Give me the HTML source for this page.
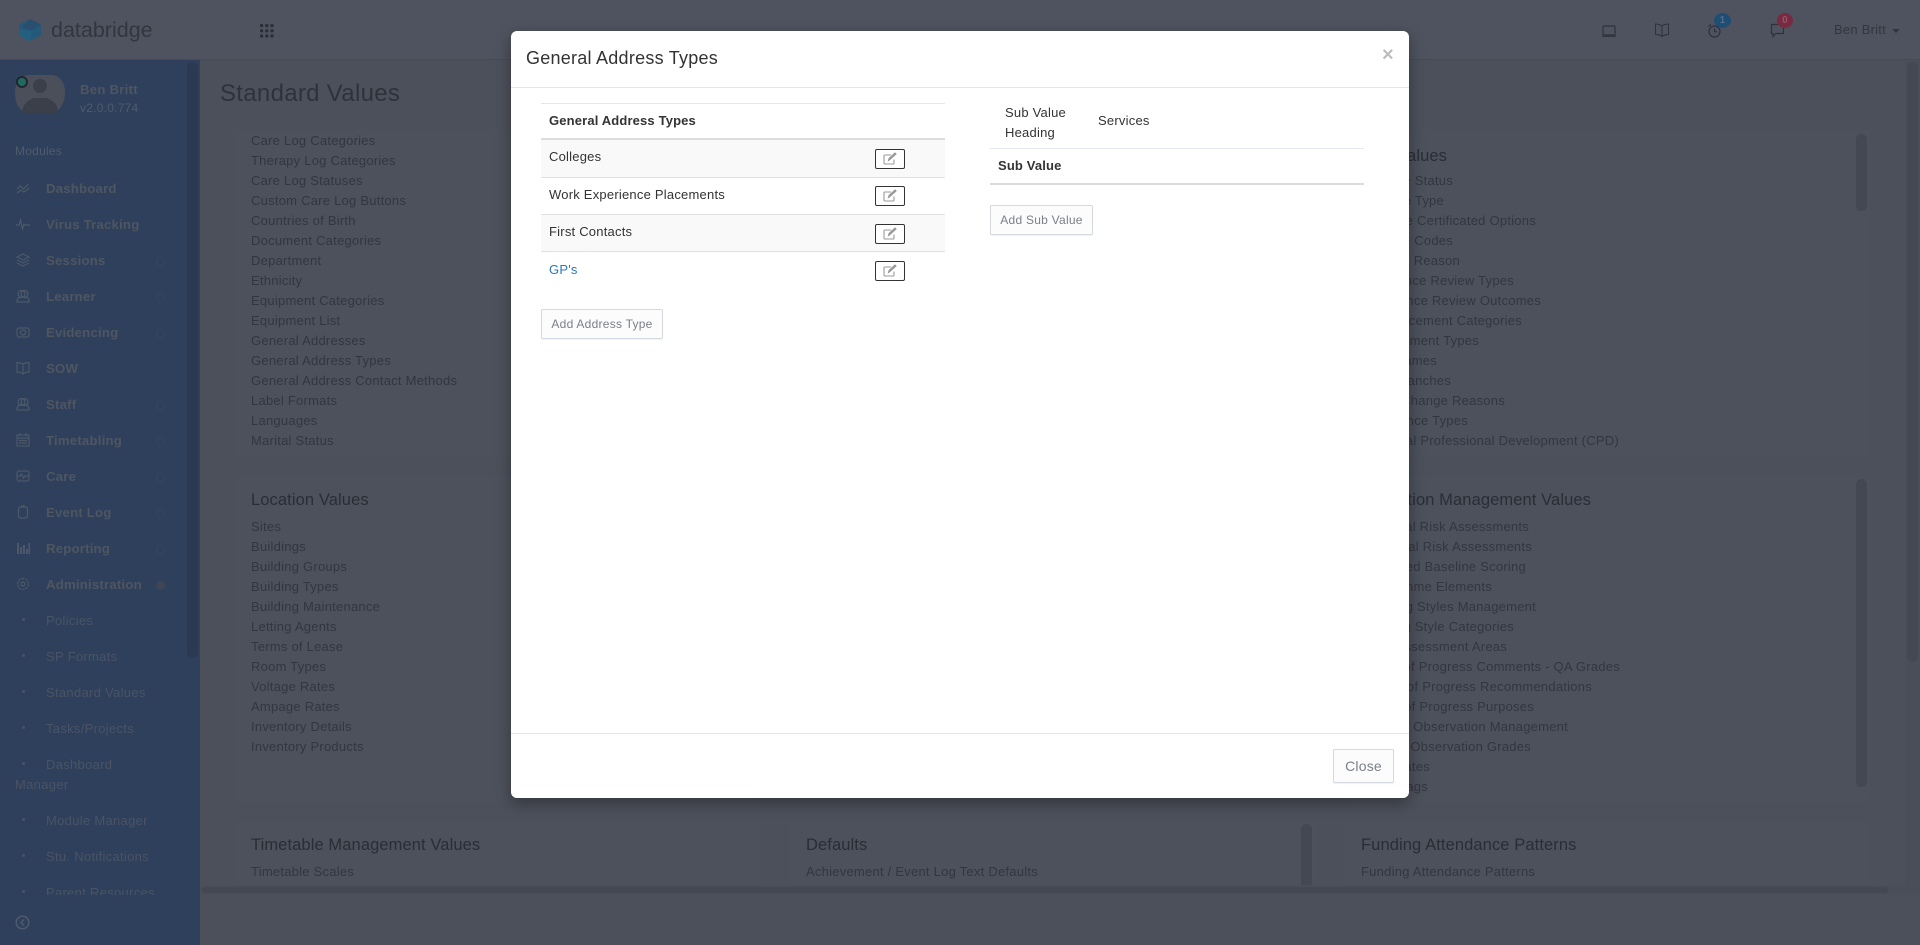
<!DOCTYPE html>
<html lang="en"><head><meta charset="utf-8"><title>Standard Values</title>
<style>
*{box-sizing:border-box}
html,body{margin:0;padding:0;width:1920px;height:945px;overflow:hidden;background:#4c505b;font-family:"Liberation Sans",sans-serif;font-size:13px;letter-spacing:.24px}
.a{position:absolute;white-space:nowrap}
.t{position:absolute;white-space:nowrap;line-height:20px;color:#33363f;margin-top:1px}
.h{position:absolute;white-space:nowrap;line-height:24px;font-size:16.5px;letter-spacing:.1px;color:#2a2d35;margin-top:1px}
.card{position:absolute;background:#4d515c}
.m{position:absolute;left:46px;line-height:20px;font-weight:bold;color:#4f5561;white-space:nowrap;font-size:13.2px;letter-spacing:.2px;margin-top:1px}
.s{position:absolute;left:46px;line-height:20px;color:#4b5364;white-space:nowrap;font-size:13px;letter-spacing:.3px;margin-top:1px}
.d{position:absolute;left:22px;width:3px;height:3px;border-radius:50%;background:#4b5364}
.c{position:absolute;left:156px;width:9px;height:9px;border-radius:50%;border:1px solid #36465f;margin-top:1px}
.i{position:absolute;left:16px;width:14px;height:14px;fill:none;stroke:#4e5868;stroke-width:1.2}
.sb{position:absolute;background:#444852;border-radius:6px}
.txt{position:absolute;white-space:nowrap;color:#333;line-height:20px;font-size:13px;margin-top:1px;letter-spacing:.22px}
.ed{position:absolute;left:875px;width:30px;height:20px;border:1px solid #333;border-radius:2px;background:#fff}
.ed svg{position:absolute;left:7px;top:2px;width:14px;height:13px;fill:none;stroke:#999;stroke-width:1.1}
.btn{position:absolute;border:1px solid #d4d8df;border-radius:2px;background:#fcfcfd;color:#7a8088;text-align:center;white-space:nowrap;box-shadow:0 1px 1px rgba(0,0,0,.06);font-size:12px;letter-spacing:.25px}
</style></head><body>

<!-- top bar -->
<div class="a" style="left:0;top:0;width:1920px;height:60px;background:#4f535f;border-bottom:1px solid #474b56"></div>
<svg class="a" style="left:18px;top:18px;width:24px;height:24px" viewBox="0 0 24 26" preserveAspectRatio="none"><polygon points="12,1 23,7 23,19 12,25 1,19 1,7" fill="#25597a"/><polygon points="12,1 23,7 14,13 3,11" fill="#2a4f6e"/><polygon points="1,12 14,14 12,25 1,19" fill="#235f7f"/></svg>
<div class="a" style="left:51px;top:14px;line-height:32px;font-size:21.5px;letter-spacing:0;color:#33363f">databridge</div>
<svg class="a" style="left:260px;top:24px;width:14px;height:14px" viewBox="0 0 14 14" fill="#2b2e36"><rect x="0" y="0" width="3.2" height="3.2" rx="1"/><rect x="5.2" y="0" width="3.2" height="3.2" rx="1"/><rect x="10.4" y="0" width="3.2" height="3.2" rx="1"/><rect x="0" y="5.2" width="3.2" height="3.2" rx="1"/><rect x="5.2" y="5.2" width="3.2" height="3.2" rx="1"/><rect x="10.4" y="5.2" width="3.2" height="3.2" rx="1"/><rect x="0" y="10.4" width="3.2" height="3.2" rx="1"/><rect x="5.2" y="10.4" width="3.2" height="3.2" rx="1"/><rect x="10.4" y="10.4" width="3.2" height="3.2" rx="1"/></svg>
<svg class="a" style="left:1601px;top:24px;width:16px;height:14px;fill:none;stroke:#2f323a;stroke-width:1.2" viewBox="0 0 16 14"><rect x="2" y="2" width="12" height="9" rx="1"/><path d="M1 12.2h14"/></svg>
<svg class="a" style="left:1654px;top:23px;width:16px;height:15px;fill:none;stroke:#2f323a;stroke-width:1" viewBox="0 0 16 15"><path d="M8 3C6 1.500 4 1 1.500 1v10.500c2.500 0 4.500.5 6.500 2 2-1.500 4-2 6.500-2V1C12 1 10 1.500 8 3zM8 3v10.500"/></svg>
<svg class="a" style="left:1707px;top:23px;width:15px;height:15px;fill:none;stroke:#2f323a;stroke-width:1.2" viewBox="0 0 15 15"><circle cx="7.500" cy="8.500" r="5.500"/><path d="M7.500 5.500v3.200h2.500M1.500 3.500L4 1.500"/></svg>
<svg class="a" style="left:1770px;top:23px;width:15px;height:15px;fill:none;stroke:#2f323a;stroke-width:1.2" viewBox="0 0 15 15"><path d="M1.500 1.500h12v9H6l-3 3v-3H1.500z"/></svg>
<div class="a" style="left:1714px;top:13px;width:17px;height:15px;border-radius:50%;background:#1f4e74;color:#4f6c88;font-size:10px;line-height:15px;text-align:center;font-weight:bold">1</div>
<div class="a" style="left:1777px;top:13px;width:16px;height:15px;border-radius:50%;background:#7a2a40;color:#8f5666;font-size:10px;line-height:15px;text-align:center;font-weight:bold">0</div>
<div class="t" style="left:1834px;top:19px">Ben Britt</div>
<div class="a" style="left:1892px;top:29px;width:0;height:0;border-left:4px solid transparent;border-right:4px solid transparent;border-top:4px solid #33363f"></div>

<!-- sidebar -->
<div class="a" style="left:0;top:60px;width:200px;height:885px;background:#2e405b"></div>
<div class="a" style="left:187px;top:62px;width:11px;height:596px;background:#2b3a52;border-radius:6px"></div>
<svg class="a" style="left:15px;top:75px;width:50px;height:38px" viewBox="0 0 50 38"><path d="M14 0h22c8 0 14 7 14 17 0 12-6 21-15 21H14C6 38 0 30 0 18 0 7 6 0 14 0z" fill="#4a4f5a"/><circle cx="25" cy="11" r="7" fill="#3b3f49"/><path d="M7 38c1-11 8-13 12-15h12c5 2 12 4 12 15z" fill="#3b3f49"/></svg>
<div class="a" style="left:16px;top:76px;width:12px;height:12px;border-radius:50%;background:#1f6b63;border:2px solid #22272f"></div>
<div class="a" style="left:80px;top:80px;line-height:20px;font-weight:bold;color:#4f5561;font-size:13.2px">Ben Britt</div>
<div class="a" style="left:80px;top:98px;line-height:20px;color:#505a6b;font-size:12px">v2.0.0.774</div>
<div class="a" style="left:15px;top:141px;line-height:20px;color:#505a6b;font-size:12px">Modules</div>

<svg class="i" style="top:181px" viewBox="0 0 14 14"><path d="M1 8l3.500-3 3 3 5-5M1 12l4-3 3 2 5-4"/></svg>
<svg class="i" style="top:217px" viewBox="0 0 14 14"><path d="M0 8h3l1.500-5 2 9 1.500-5 1 1h5"/></svg>
<svg class="i" style="top:253px" viewBox="0 0 14 14"><path d="M7 1l6 3-6 3-6-3zM1 7l6 3 6-3M1 10l6 3 6-3"/></svg>
<svg class="i" style="top:289px" viewBox="0 0 14 14"><circle cx="5.500" cy="5" r="3.500"/><circle cx="8.500" cy="5" r="3.500"/><path d="M1 13c0-4 2-5 4-5h4c2 0 4 1 4 5z"/></svg>
<svg class="i" style="top:325px" viewBox="0 0 14 14"><rect x="1" y="3" width="12" height="9" rx="2"/><circle cx="7" cy="7.500" r="2.500"/></svg>
<svg class="i" style="top:361px" viewBox="0 0 14 14"><path d="M7 3C5 2 3 1.500 1 1.500v9.500c2 0 4 .5 6 2 2-1.500 4-2 6-2V1.500C11 1.500 9 2 7 3zM7 3v10"/></svg>
<svg class="i" style="top:397px" viewBox="0 0 14 14"><circle cx="5.500" cy="5" r="3.500"/><circle cx="8.500" cy="5" r="3.500"/><path d="M1 13c0-4 2-5 4-5h4c2 0 4 1 4 5z"/></svg>
<svg class="i" style="top:433px" viewBox="0 0 14 14"><rect x="1" y="2" width="12" height="11"/><path d="M1 5h12M4 0v3M10 0v3M3 7.500h8M3 10h8"/></svg>
<svg class="i" style="top:469px" viewBox="0 0 14 14"><rect x="1" y="2" width="12" height="10" rx="2"/><path d="M1 7h3l1.500-2 2 4 1.500-2h4"/></svg>
<svg class="i" style="top:505px" viewBox="0 0 14 14"><rect x="2.500" y="2" width="9" height="11" rx="2"/><path d="M5 1h4"/></svg>
<svg class="i" style="top:541px;stroke-width:2" viewBox="0 0 14 14"><path d="M2 13V2M5 13V6M8 13V4M11 13V8M13.500 13V2"/></svg>
<svg class="i" style="top:577px" viewBox="0 0 14 14"><circle cx="7" cy="7" r="2"/><circle cx="7" cy="7" r="5.500" stroke-dasharray="2.500 1"/></svg>

<div class="m" style="top:178px">Dashboard</div>
<div class="m" style="top:214px">Virus Tracking</div>
<div class="m" style="top:250px">Sessions</div><div class="c" style="top:256px"></div>
<div class="m" style="top:286px">Learner</div><div class="c" style="top:292px"></div>
<div class="m" style="top:322px">Evidencing</div><div class="c" style="top:328px"></div>
<div class="m" style="top:358px">SOW</div>
<div class="m" style="top:394px">Staff</div><div class="c" style="top:400px"></div>
<div class="m" style="top:430px">Timetabling</div><div class="c" style="top:436px"></div>
<div class="m" style="top:466px">Care</div><div class="c" style="top:472px"></div>
<div class="m" style="top:502px">Event Log</div><div class="c" style="top:508px"></div>
<div class="m" style="top:538px">Reporting</div><div class="c" style="top:544px"></div>
<div class="m" style="top:574px">Administration</div><div class="c" style="top:580px;background:#3e4553;border-color:#3e4553"></div>

<div class="d" style="top:618px"></div><div class="s" style="top:610px">Policies</div>
<div class="d" style="top:654px"></div><div class="s" style="top:646px">SP Formats</div>
<div class="d" style="top:690px"></div><div class="s" style="top:682px">Standard Values</div>
<div class="d" style="top:726px"></div><div class="s" style="top:718px">Tasks/Projects</div>
<div class="d" style="top:762px"></div><div class="s" style="top:754px">Dashboard</div>
<div class="s" style="top:774px;left:15px">Manager</div>
<div class="d" style="top:818px"></div><div class="s" style="top:810px">Module Manager</div>
<div class="d" style="top:854px"></div><div class="s" style="top:846px">Stu. Notifications</div>
<div class="a" style="left:0;top:880px;width:200px;height:15px;overflow:hidden"><div class="d" style="top:10px"></div><div class="s" style="top:2px">Parent Resources</div></div>
<svg class="a" style="left:15px;top:915px;width:15px;height:15px;fill:none;stroke:#4f5a6b;stroke-width:1.500" viewBox="0 0 15 15"><circle cx="7.500" cy="7.500" r="6.300"/><path d="M9 4.500l-3 3 3 3"/></svg>

<!-- page content -->
<div class="a" style="left:220px;top:76px;line-height:36px;font-size:24px;letter-spacing:.3px;color:#2f323b">Standard Values</div>

<div class="card" style="left:235px;top:130px;width:526px;height:327px"></div>
<div class="card" style="left:1345px;top:130px;width:525px;height:327px"></div>
<div class="card" style="left:235px;top:476px;width:526px;height:326px"></div>
<div class="card" style="left:1345px;top:476px;width:525px;height:326px"></div>
<div class="card" style="left:235px;top:822px;width:526px;height:63px"></div>
<div class="card" style="left:790px;top:822px;width:526px;height:63px"></div>
<div class="card" style="left:1345px;top:822px;width:525px;height:63px"></div>

<div class="t" style="left:251px;top:130px">Care Log Categories</div>
<div class="t" style="left:251px;top:150px">Therapy Log Categories</div>
<div class="t" style="left:251px;top:170px">Care Log Statuses</div>
<div class="t" style="left:251px;top:190px">Custom Care Log Buttons</div>
<div class="t" style="left:251px;top:210px">Countries of Birth</div>
<div class="t" style="left:251px;top:230px">Document Categories</div>
<div class="t" style="left:251px;top:250px">Department</div>
<div class="t" style="left:251px;top:270px">Ethnicity</div>
<div class="t" style="left:251px;top:290px">Equipment Categories</div>
<div class="t" style="left:251px;top:310px">Equipment List</div>
<div class="t" style="left:251px;top:330px">General Addresses</div>
<div class="t" style="left:251px;top:350px">General Address Types</div>
<div class="t" style="left:251px;top:370px">General Address Contact Methods</div>
<div class="t" style="left:251px;top:390px">Label Formats</div>
<div class="t" style="left:251px;top:410px">Languages</div>
<div class="t" style="left:251px;top:430px">Marital Status</div>

<div class="h" style="left:251px;top:487px">Location Values</div>
<div class="t" style="left:251px;top:516px">Sites</div>
<div class="t" style="left:251px;top:536px">Buildings</div>
<div class="t" style="left:251px;top:556px">Building Groups</div>
<div class="t" style="left:251px;top:576px">Building Types</div>
<div class="t" style="left:251px;top:596px">Building Maintenance</div>
<div class="t" style="left:251px;top:616px">Letting Agents</div>
<div class="t" style="left:251px;top:636px">Terms of Lease</div>
<div class="t" style="left:251px;top:656px">Room Types</div>
<div class="t" style="left:251px;top:676px">Voltage Rates</div>
<div class="t" style="left:251px;top:696px">Ampage Rates</div>
<div class="t" style="left:251px;top:716px">Inventory Details</div>
<div class="t" style="left:251px;top:736px">Inventory Products</div>

<div class="h" style="left:251px;top:832px">Timetable Management Values</div>
<div class="t" style="left:251px;top:861px">Timetable Scales</div>
<div class="h" style="left:806px;top:832px">Defaults</div>
<div class="t" style="left:806px;top:861px">Achievement / Event Log Text Defaults</div>
<div class="h" style="left:1361px;top:832px">Funding Attendance Patterns</div>
<div class="t" style="left:1361px;top:861px">Funding Attendance Patterns</div>

<div class="h" style="right:473px;top:143px">Course Values</div>
<div class="t" style="right:467px;top:170px">Course Status</div>
<div class="t" style="right:476px;top:190px">Course Type</div>
<div class="t" style="right:384px;top:210px">Course Certificated Options</div>
<div class="t" style="right:467px;top:230px">Course Codes</div>
<div class="t" style="right:460px;top:250px">Leave Reason</div>
<div class="t" style="right:406px;top:270px">Attendance Review Types</div>
<div class="t" style="right:379px;top:290px">Attendance Review Outcomes</div>
<div class="t" style="right:398px;top:310px">Placement Categories</div>
<div class="t" style="right:441px;top:330px">Employment Types</div>
<div class="t" style="right:483px;top:350px">Names</div>
<div class="t" style="right:469px;top:370px">Branches</div>
<div class="t" style="right:415px;top:390px">Change Reasons</div>
<div class="t" style="right:452px;top:410px">Absence Types</div>
<div class="t" style="right:301px;top:430px">Continual Professional Development (CPD)</div>

<div class="h" style="right:329px;top:487px">Education Management Values</div>
<div class="t" style="right:391px;top:516px">Initial Risk Assessments</div>
<div class="t" style="right:388px;top:536px">Internal Risk Assessments</div>
<div class="t" style="right:394px;top:556px">Advanced Baseline Scoring</div>
<div class="t" style="right:428px;top:576px">Programme Elements</div>
<div class="t" style="right:384px;top:596px">Learning Styles Management</div>
<div class="t" style="right:406px;top:616px">Learning Style Categories</div>
<div class="t" style="right:413px;top:636px">Assessment Areas</div>
<div class="t" style="right:300px;top:656px">Review of Progress Comments - QA Grades</div>
<div class="t" style="right:328px;top:676px">Review of Progress Recommendations</div>
<div class="t" style="right:386px;top:696px">Review of Progress Purposes</div>
<div class="t" style="right:352px;top:716px">Lesson Observation Management</div>
<div class="t" style="right:389px;top:736px">Lesson Observation Grades</div>
<div class="t" style="right:490px;top:756px">Dates</div>
<div class="t" style="right:492px;top:776px">Tags</div>

<!-- scrollbars -->
<div class="sb" style="left:1856px;top:134px;width:11px;height:77px"></div>
<div class="sb" style="left:1856px;top:479px;width:11px;height:308px"></div>
<div class="sb" style="left:1301px;top:824px;width:11px;height:61px;border-radius:6px 6px 0 0"></div>
<div class="a" style="left:200px;top:885px;width:1705px;height:10px;background:#4a4e59"></div>
<div class="sb" style="left:202px;top:887px;width:1686px;height:6px"></div>
<div class="a" style="left:1905px;top:60px;width:15px;height:835px;background:#4a4e59"></div>
<div class="sb" style="left:1907px;top:62px;width:11px;height:600px"></div>

<!-- modal -->
<div class="a" style="left:511px;top:31px;width:898px;height:767px;background:#fff;border-radius:6px;box-shadow:0 5px 15px rgba(0,0,0,.35)"></div>
<div class="a" style="left:526px;top:44px;line-height:28px;font-size:18px;letter-spacing:.25px;color:#333">General Address Types</div>
<div class="a" style="left:1382px;top:43px;line-height:24px;font-size:20px;font-weight:bold;color:#bdbdbd;letter-spacing:0">×</div>
<div class="a" style="left:511px;top:87px;width:898px;height:1px;background:#e5e5e5"></div>

<div class="a" style="left:541px;top:103px;width:404px;height:1px;background:#e6e6e6"></div>
<div class="txt" style="left:549px;top:110px;font-weight:bold;color:#333;letter-spacing:.15px">General Address Types</div>
<div class="a" style="left:541px;top:138px;width:404px;height:2px;background:#dcdcdc"></div>
<div class="a" style="left:541px;top:140px;width:404px;height:37px;background:#f9f9f9"></div>
<div class="a" style="left:541px;top:177px;width:404px;height:1px;background:#e0e0e0"></div>
<div class="a" style="left:541px;top:214px;width:404px;height:38px;background:#f9f9f9;border-top:1px solid #e0e0e0;border-bottom:1px solid #e0e0e0"></div>
<div class="txt" style="left:549px;top:146px">Colleges</div>
<div class="txt" style="left:549px;top:184px">Work Experience Placements</div>
<div class="txt" style="left:549px;top:221px">First Contacts</div>
<div class="txt" style="left:549px;top:259px;color:#2a7ab8">GP's</div>
<div class="ed" style="top:149px"><svg viewBox="0 0 14 13"><path d="M11 7.500V11a1 1 0 0 1-1 1H2a1 1 0 0 1-1-1V4a1 1 0 0 1 1-1h6"/><path d="M5.500 8.500l.5-2 6-5.500 1 1-6 5.500z" fill="#999"/></svg></div>
<div class="ed" style="top:186px"><svg viewBox="0 0 14 13"><path d="M11 7.500V11a1 1 0 0 1-1 1H2a1 1 0 0 1-1-1V4a1 1 0 0 1 1-1h6"/><path d="M5.500 8.500l.5-2 6-5.500 1 1-6 5.500z" fill="#999"/></svg></div>
<div class="ed" style="top:224px"><svg viewBox="0 0 14 13"><path d="M11 7.500V11a1 1 0 0 1-1 1H2a1 1 0 0 1-1-1V4a1 1 0 0 1 1-1h6"/><path d="M5.500 8.500l.5-2 6-5.500 1 1-6 5.500z" fill="#999"/></svg></div>
<div class="ed" style="top:261px"><svg viewBox="0 0 14 13"><path d="M11 7.500V11a1 1 0 0 1-1 1H2a1 1 0 0 1-1-1V4a1 1 0 0 1 1-1h6"/><path d="M5.500 8.500l.5-2 6-5.500 1 1-6 5.500z" fill="#999"/></svg></div>
<div class="btn" style="left:541px;top:309px;width:122px;height:30px;line-height:28px">Add Address Type</div>

<div class="txt" style="left:1005px;top:102px">Sub Value</div>
<div class="txt" style="left:1005px;top:122px">Heading</div>
<div class="txt" style="left:1098px;top:110px">Services</div>
<div class="a" style="left:990px;top:148px;width:374px;height:1px;background:#e6eaf0"></div>
<div class="txt" style="left:998px;top:155px;font-weight:bold;letter-spacing:.15px">Sub Value</div>
<div class="a" style="left:990px;top:183px;width:374px;height:2px;background:#dcdcdc"></div>
<div class="btn" style="left:990px;top:205px;width:103px;height:30px;line-height:28px">Add Sub Value</div>

<div class="a" style="left:511px;top:733px;width:898px;height:1px;background:#e5e5e5"></div>
<div class="btn" style="left:1333px;top:749px;width:61px;height:34px;line-height:32px;font-size:14px;letter-spacing:.2px">Close</div>
</body></html>
